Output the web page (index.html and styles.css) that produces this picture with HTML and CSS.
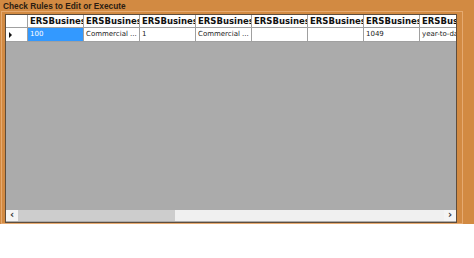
FILE: index.html
```html
<!DOCTYPE html>
<html>
<head>
<meta charset="utf-8">
<link rel="stylesheet" href="styles.css">
</head>
<body>
<div class="window">
  <div class="title">Check Rules to Edit or Execute</div>
  <div class="group">
    <div class="grid">
      <div class="rows">
        <div class="row head">
          <div class="rh"></div>
          <div class="c">ERSBusiness</div>
          <div class="c">ERSBusiness</div>
          <div class="c">ERSBusiness</div>
          <div class="c">ERSBusiness</div>
          <div class="c">ERSBusiness</div>
          <div class="c">ERSBusiness</div>
          <div class="c">ERSBusiness</div>
          <div class="c">ERSBusiness</div>
        </div>
        <div class="row data">
          <div class="rh"><span class="arrow"></span></div>
          <div class="c sel">100</div>
          <div class="c">Commercial ...</div>
          <div class="c">1</div>
          <div class="c">Commercial ...</div>
          <div class="c"></div>
          <div class="c"></div>
          <div class="c">1049</div>
          <div class="c">year-to-date</div>
        </div>
      </div>
      <div class="scroll">
        <div class="btn">&#8249;</div>
        <div class="thumb"></div>
        <div class="track"></div>
        <div class="btn">&#8250;</div>
      </div>
    </div>
  </div>
</div>
</body>
</html>
```

FILE: styles.css
```css
html, body {
  margin: 0;
  padding: 0;
  background: #ffffff;
}
.window {
  width: 474px;
  height: 224px;
  box-sizing: border-box;
  background: #d28a42;
  padding: 0 11px 0 1px;
  display: flex;
  flex-direction: column;
  font-family: "DejaVu Sans", "Liberation Sans", sans-serif;
}
.title {
  height: 11px;
  line-height: 12px;
  padding-left: 2px;
  font-family: "Liberation Sans", Arial, sans-serif;
  font-size: 8.3px;
  font-weight: bold;
  color: #2b1d12;
  white-space: nowrap;
}
.group {
  flex: 1;
  border: 1px solid #e6aa70;
  padding: 2px 5px 0 3px;
  display: flex;
  flex-direction: column;
}
.grid {
  flex: 1;
  border: 1px solid #5e4d3c;
  background: #ababab;
  display: flex;
  flex-direction: column;
  overflow: hidden;
}
.rows {
  flex: 1;
  overflow: hidden;
}
.row {
  display: grid;
  grid-template-columns: 22px repeat(8, 56px);
  height: 13px;
  background: #ffffff;
  border-bottom: 1px solid #a0a0a0;
  width: max-content;
}
.row.head {
  height: 12px;
}
.rh {
  border-right: 1px solid #a0a0a0;
  display: flex;
  align-items: center;
  padding-left: 3px;
}
.c {
  border-right: 1px solid #a0a0a0;
  font-size: 7px;
  line-height: 13px;
  padding-left: 2px;
  color: #222222;
  white-space: nowrap;
  overflow: hidden;
  font-family: "DejaVu Sans", sans-serif;
}
.head .c {
  font-weight: bold;
  font-size: 8.5px;
  line-height: 13px;
  color: #111111;
}
.sel {
  background: #3399ff;
  color: #ffffff;
}
.arrow {
  width: 0;
  height: 0;
  border-top: 3px solid transparent;
  border-bottom: 3px solid transparent;
  border-left: 3px solid #111111;
}
.scroll {
  height: 11px;
  display: flex;
  background: #f0f0f0;
  margin-bottom: 1px;
}
.btn {
  width: 12px;
  font-size: 10px;
  line-height: 10px;
  text-align: center;
  color: #333333;
  background: #f4f4f4;
  font-weight: bold;
}
.thumb {
  width: 157px;
  background: #cdcdcd;
}
.track {
  flex: 1;
  background: #f0f0f0;
}
```
